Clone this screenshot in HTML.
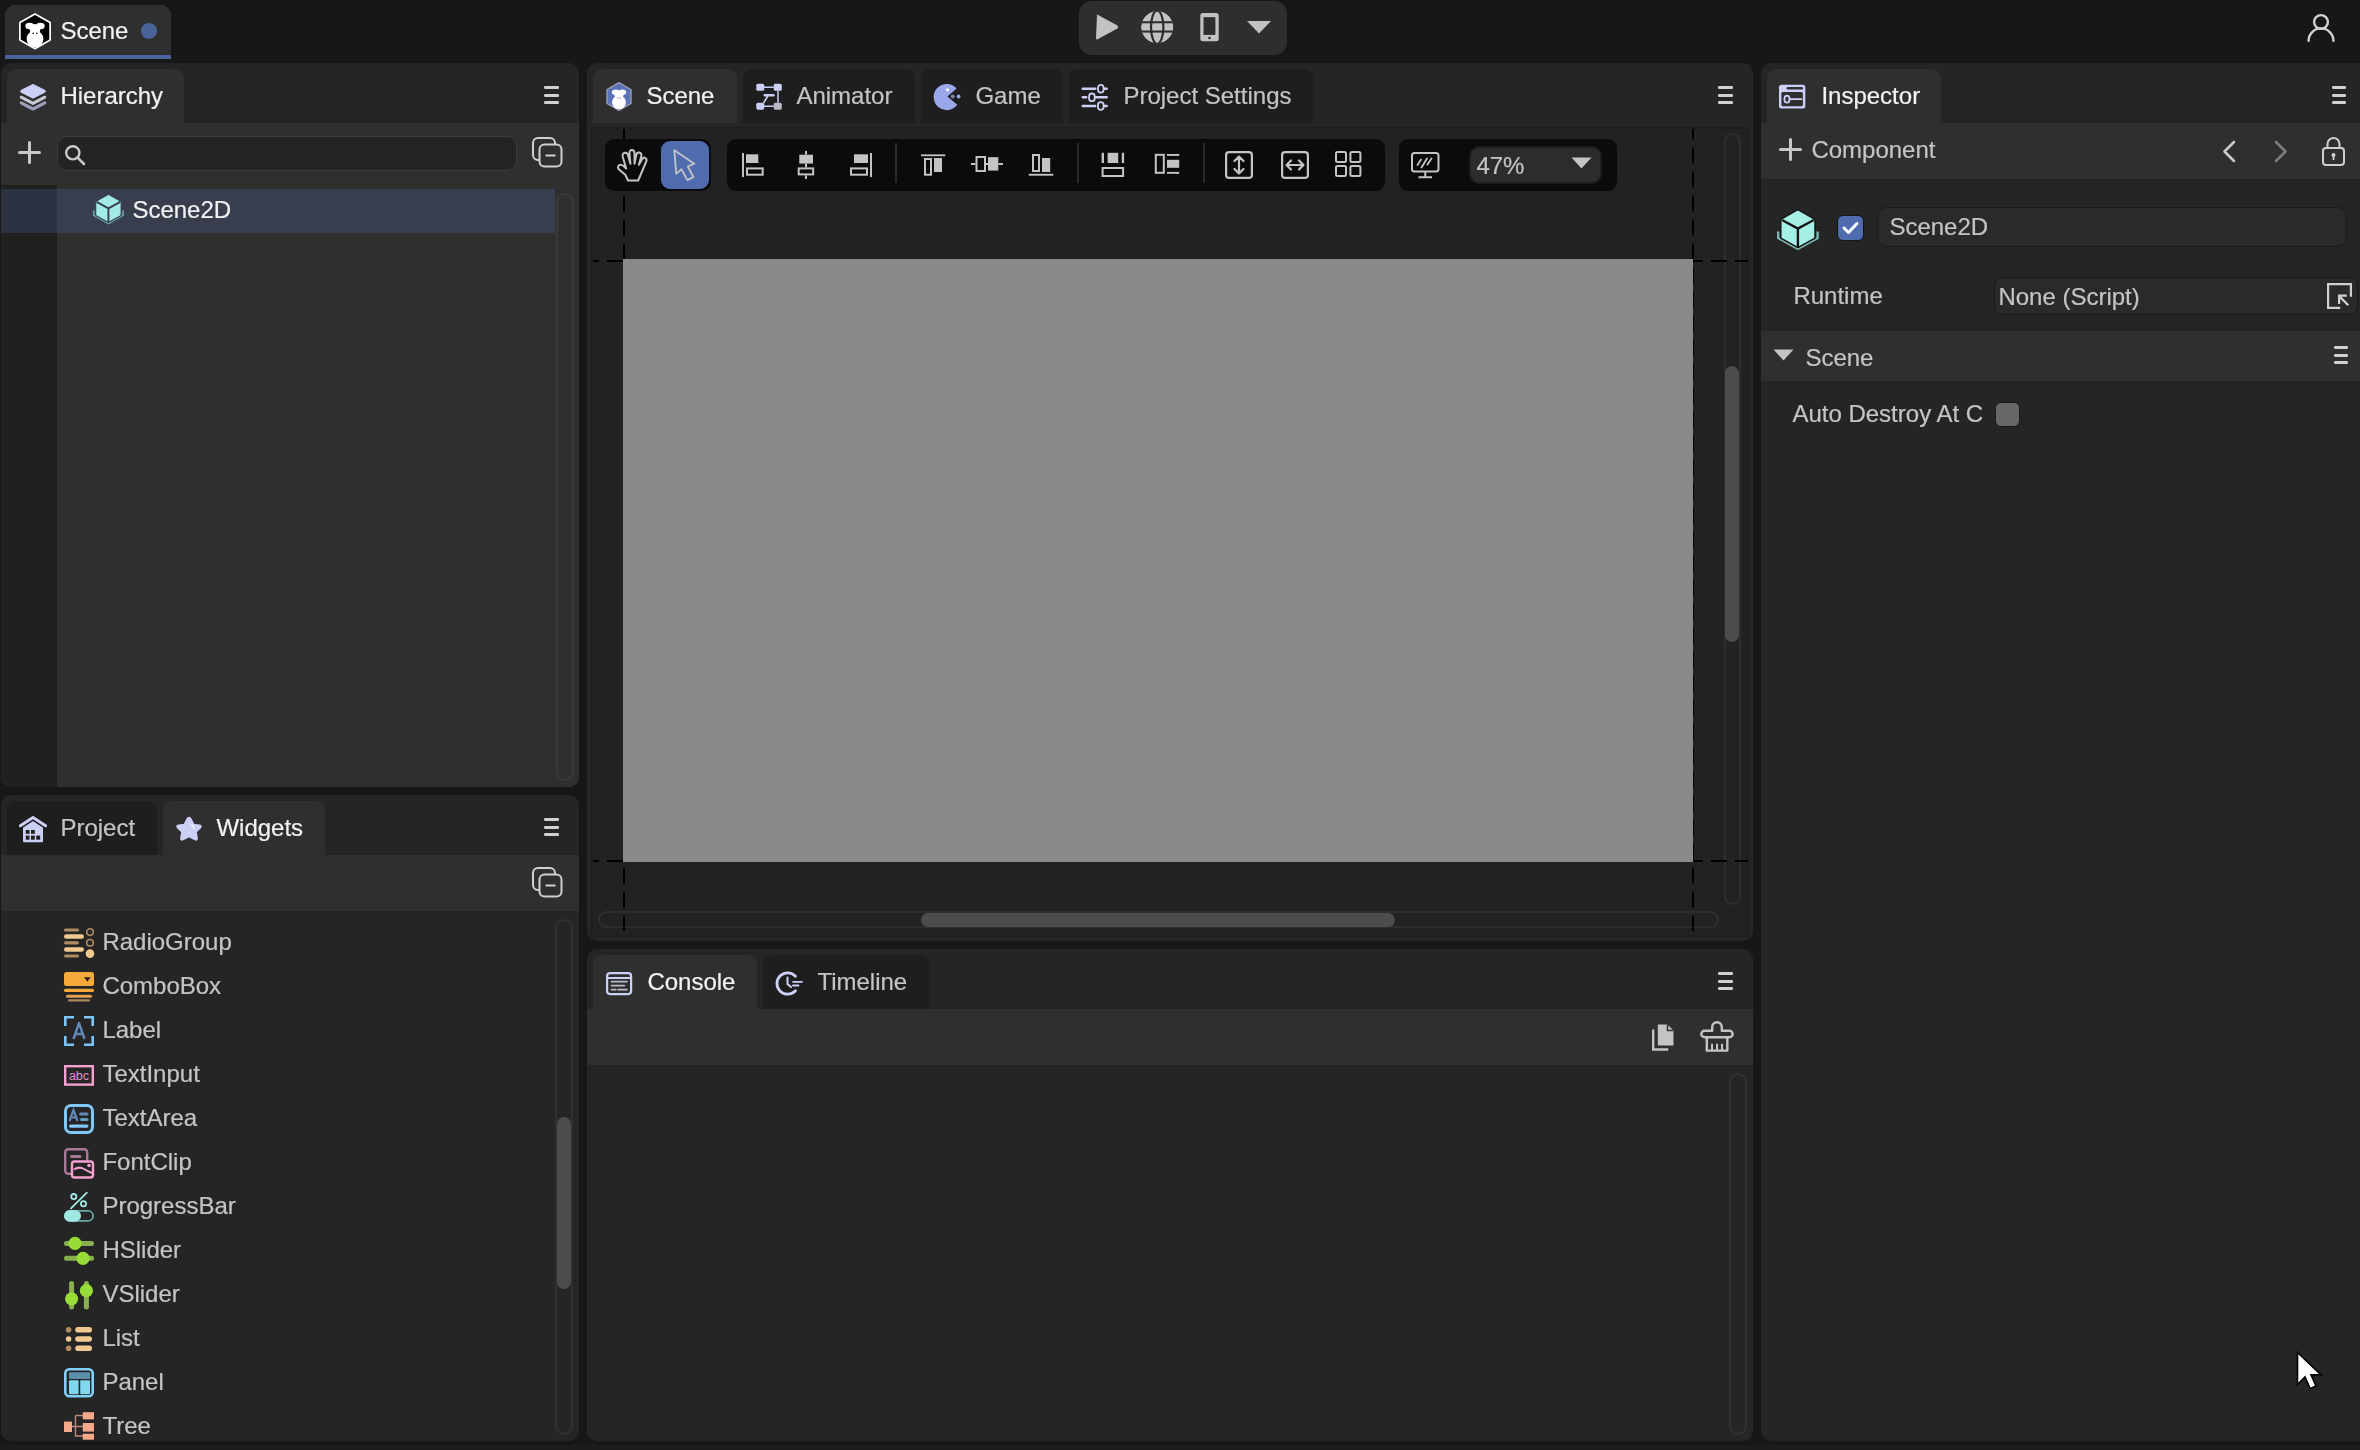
<!DOCTYPE html>
<html><head><meta charset="utf-8">
<style>
*{margin:0;padding:0;box-sizing:border-box}
html,body{width:2360px;height:1450px;overflow:hidden;background:#171717;font-family:"Liberation Sans",sans-serif;font-size:24px;color:#c4c4c4}
.a{position:absolute}
.t{position:absolute;line-height:24px;white-space:nowrap;font-size:24px;transform:translateX(-0.6px);will-change:transform;-webkit-text-stroke:0.2px currentColor}
.w{color:#f2f2f2}
.panel{position:absolute;background:#252525;border-radius:10px;overflow:hidden}
.tab{position:absolute;top:6px;height:54px;border-radius:9px 9px 0 0;background:#2f2f2f}
.itab{background:#1e1e1e}
.ham{position:absolute;width:15px;height:18px}
.ham i{position:absolute;left:0;width:14.5px;height:2.8px;border-radius:1.2px;background:#d0d0d0}
.track{position:absolute;border:2px solid rgba(255,255,255,0.055);border-radius:9px}
.thumb{position:absolute;background:#4c4c4c;border-radius:7px}
svg{position:absolute;overflow:visible}
</style></head>
<body>
<!-- TOP BAR -->
<div class="a" style="left:5px;top:5px;width:166px;height:50px;background:#2f2f2f;border-radius:10px 10px 0 0"></div>
<div class="a" style="left:5px;top:55px;width:166px;height:4px;background:#4a6399"></div>
<svg style="left:19px;top:12.5px" width="32" height="37" viewBox="0 0 32 37">
 <path d="M16 0.9 L31.1 9.6 L31.1 27 L16 35.8 L0.9 27 L0.9 9.6 Z" fill="#000" stroke="#fff" stroke-width="1.7" stroke-linejoin="round"/>
 <ellipse cx="10.6" cy="13" rx="4.3" ry="3.3" fill="#fff"/><ellipse cx="21.4" cy="13" rx="4.3" ry="3.3" fill="#fff"/>
 <ellipse cx="16" cy="16.5" rx="5.3" ry="5.5" fill="#fff"/>
 <circle cx="16" cy="26" r="8.4" fill="#fff"/>
 <circle cx="14.2" cy="20.2" r="0.8" fill="#000"/><circle cx="17.8" cy="20.2" r="0.8" fill="#000"/>
</svg>
<div class="t w" style="left:61px;top:18.8px">Scene</div>
<div class="a" style="left:141px;top:23px;width:16px;height:16px;border-radius:50%;background:#4a6399"></div>

<div class="a" style="left:1079px;top:1px;width:208px;height:54px;background:#2e2e2e;border-radius:13px"></div>
<svg style="left:1095px;top:13px" width="24" height="28" viewBox="0 0 24 28">
 <path d="M2 2.5 Q1 1 2.6 1.8 L22.5 12.6 Q24 14 22.5 15.4 L2.6 26.2 Q1 27 1 25.3 Z" fill="#c2c2c2"/>
</svg>
<svg style="left:1141px;top:10.5px" width="33" height="33" viewBox="0 0 33 33">
 <defs><clipPath id="gc"><circle cx="16.2" cy="16.2" r="16.1"/></clipPath></defs>
 <g clip-path="url(#gc)">
 <circle cx="16.2" cy="16.2" r="16.1" fill="#c2c2c2"/>
 <rect x="0" y="10.2" width="33" height="2.1" fill="#2e2e2e"/>
 <rect x="0" y="19.5" width="33" height="2.1" fill="#2e2e2e"/>
 <ellipse cx="16.2" cy="16.2" rx="6.2" ry="16.6" fill="none" stroke="#2e2e2e" stroke-width="2.2"/>
 </g>
</svg>
<svg style="left:1199.5px;top:12.8px" width="19" height="29" viewBox="0 0 19 29">
 <rect x="0.3" y="0.1" width="18.4" height="28.2" rx="2.5" fill="#c2c2c2"/>
 <rect x="3.5" y="4.2" width="11.9" height="17.7" fill="#2e2e2e"/>
 <circle cx="9.5" cy="25" r="1.3" fill="#2e2e2e"/>
</svg>
<svg style="left:1246px;top:20px" width="26" height="14" viewBox="0 0 26 14">
 <path d="M1 1 L25 1 L13 13.5 Z" fill="#c2c2c2"/>
</svg>
<svg style="left:2307px;top:13px" width="28" height="29" viewBox="0 0 28 29">
 <circle cx="14" cy="9" r="6.9" fill="none" stroke="#d2d2d2" stroke-width="2.4"/>
 <path d="M1.6 27.8 A12.4 12.4 0 0 1 26.4 27.8" fill="none" stroke="#d2d2d2" stroke-width="2.4" stroke-linecap="round"/>
</svg>

<!-- PANELS -->
<div class="panel" style="left:1px;top:63px;width:578px;height:724px">
 <div class="tab" style="left:6px;width:177px"></div>
 <svg style="left:18px;top:21px" width="28" height="27" viewBox="0 0 28 27">
  <path d="M2.2 18.8 L14 25 L25.8 18.8" fill="none" stroke="#9c9eba" stroke-width="3.2" stroke-linecap="round" stroke-linejoin="round"/>
  <path d="M2.2 13.2 L14 19.4 L25.8 13.2" fill="none" stroke="#c9cad8" stroke-width="3" stroke-linecap="round" stroke-linejoin="round"/>
  <path d="M14 0.4 L25.8 6.3 Q27.3 7.25 25.8 8.2 L14 14.2 L2.2 8.2 Q0.7 7.25 2.2 6.3 Z" fill="#cdd0f6" stroke="#cdd0f6" stroke-width="1" stroke-linejoin="round"/>
 </svg>
 <div class="t w" style="left:60.4px;top:20.9px">Hierarchy</div>
 <div class="ham" style="left:543px;top:23px"><i style="top:0.2px"></i><i style="top:7.8px"></i><i style="top:15.4px"></i></div>
 <div class="a" style="left:0;top:60px;width:578px;height:664px;background:#2f2f2f"></div>
 <svg style="left:16.5px;top:78.4px" width="23" height="23" viewBox="0 0 23 23">
  <path d="M11.5 1.5 V21.5 M1.5 11.5 H21.5" stroke="#c8c8c8" stroke-width="3" stroke-linecap="round"/>
 </svg>
 <div class="a" style="left:56px;top:73px;width:460px;height:35px;background:#242424;border:1.5px solid #3c3c3c;border-radius:10px"></div>
 <svg style="left:63.3px;top:81px" width="22" height="22" viewBox="0 0 22 22">
  <circle cx="8.8" cy="8.8" r="6.6" fill="none" stroke="#c8c8c8" stroke-width="2.4"/>
  <path d="M13.6 13.6 L20 20" stroke="#c8c8c8" stroke-width="2.6" stroke-linecap="round"/>
 </svg>
 <svg style="left:531px;top:74px" width="31" height="31" viewBox="0 0 31 31">
  <rect x="1" y="1" width="22" height="22" rx="5" fill="none" stroke="#d0d0d0" stroke-width="2"/>
  <rect x="7.5" y="7.5" width="22" height="22" rx="5" fill="#2f2f2f" stroke="#d0d0d0" stroke-width="2"/>
  <path d="M13.5 18.5 H23.5" stroke="#d0d0d0" stroke-width="2.2"/>
 </svg>
 <div class="a" style="left:0;top:122px;width:56px;height:602px;background:#202020"></div>
 <div class="a" style="left:0;top:126px;width:56px;height:44px;background:#2d3242"></div>
 <div class="a" style="left:56px;top:126px;width:498px;height:44px;background:#383e4e"></div>
 <svg style="left:91px;top:129.5px" width="33" height="32" viewBox="0 0 44 43"><path d="M2.2 23.5 V30 L21.9 41 L41.6 30 V23.5" fill="none" stroke="#6aa6a2" stroke-width="2.2"/>
  <path d="M21.9 1.6 L39 11.3 L39 30.2 L21.9 39.6 L4.8 30.2 L4.8 11.3 Z" fill="#a2ebe4" stroke="#383e4e" stroke-width="1.5" stroke-linejoin="round"/>
  <path d="M6 12 L21.9 20.6 L37.8 12 M21.9 20.6 V39" fill="none" stroke="#383e4e" stroke-width="2.6"/></svg>
 <div class="t w" style="left:131.5px;top:134.6px">Scene2D</div>
 <div class="track" style="left:555px;top:130px;width:18px;height:588px"></div>
</div>
<div class="panel" style="left:1px;top:795px;width:578px;height:646px">
 <div class="tab itab" style="left:6px;width:150px;height:53.5px"></div>
 <div class="tab" style="left:162px;width:162px;height:53.5px"></div>
 <svg style="left:18px;top:21px" width="29" height="28" viewBox="0 0 29 28">
  <path d="M4 10.5 L14 4.2 L24 10.5 V25 Q24 26.2 22.8 26.2 H5.2 Q4 26.2 4 25 Z" fill="#cdd0f6"/>
  <path d="M1.4 9.8 L14 1.6 L26.6 9.8" fill="none" stroke="#1e1e1e" stroke-width="6" stroke-linecap="round" stroke-linejoin="round"/>
  <path d="M1.4 9.8 L14 1.6 L26.6 9.8" fill="none" stroke="#cdd0f6" stroke-width="3" stroke-linecap="round" stroke-linejoin="round"/>
  <rect x="6.8" y="14" width="3.7" height="3.8" fill="#1e1e1e"/><rect x="12" y="14" width="3.8" height="3.8" fill="#1e1e1e"/>
  <rect x="6.8" y="19.6" width="3.7" height="4.1" fill="#1e1e1e"/><rect x="12" y="19.6" width="3.8" height="4.1" fill="#1e1e1e"/><rect x="17.2" y="19.6" width="4" height="4.1" fill="#1e1e1e"/>
 </svg>
 <div class="t" style="left:60px;top:20.8px">Project</div>
 <svg style="left:174.4px;top:21px" width="28" height="27" viewBox="0 0 28 27">
  <path d="M14 1.5 Q15.2 1.5 16 3 L18.6 8.4 L24.6 9.3 Q27 9.8 25.4 11.6 L21 16 L22.1 22 Q22.4 24.6 20 23.6 L14 20.6 L8 23.6 Q5.6 24.6 5.9 22 L7 16 L2.6 11.6 Q1 9.8 3.4 9.3 L9.4 8.4 L12 3 Q12.8 1.5 14 1.5 Z" fill="#cdd0f6" stroke="#cdd0f6" stroke-width="1.5" stroke-linejoin="round"/>
  <path d="M16.8 8.8 Q18.6 10.4 19.2 12.4" fill="none" stroke="#f6f6ff" stroke-width="1.3" stroke-linecap="round"/>
 </svg>
 <div class="t w" style="left:215.9px;top:20.8px">Widgets</div>
 <div class="ham" style="left:543px;top:23px"><i style="top:0.2px"></i><i style="top:7.8px"></i><i style="top:15.4px"></i></div>
 <div class="a" style="left:0;top:59.5px;width:578px;height:56px;background:#2f2f2f"></div>
 <svg style="left:530.5px;top:72px" width="31" height="31" viewBox="0 0 31 31">
  <rect x="1" y="1" width="22" height="22" rx="5" fill="none" stroke="#d0d0d0" stroke-width="2"/>
  <rect x="7.5" y="7.5" width="22" height="22" rx="5" fill="#2f2f2f" stroke="#d0d0d0" stroke-width="2"/>
  <path d="M13.5 18.5 H23.5" stroke="#d0d0d0" stroke-width="2.2"/>
 </svg>
 <div class="a" style="left:0;top:115.5px;width:578px;height:530px;background:#252525"></div>
<svg style="left:63px;top:133px" width="30" height="30" viewBox="0 0 30 30"><rect x="0" y="0.5" width="15" height="3" rx="1.5" fill="#b08a60"/><rect x="0" y="6.3" width="20" height="4.5" rx="2.25" fill="#f0c890"/><rect x="0" y="13.2" width="15" height="3.2" rx="1.6" fill="#b08a60"/><rect x="0" y="19.3" width="20" height="4.5" rx="2.25" fill="#f0c890"/><rect x="0" y="26.5" width="15" height="3.1" rx="1.55" fill="#b08a60"/><circle cx="26" cy="4.1" r="3.3" fill="none" stroke="#b08a60" stroke-width="1.6"/><circle cx="26" cy="14.8" r="3.3" fill="none" stroke="#b08a60" stroke-width="1.6"/><circle cx="26" cy="25.6" r="4.3" fill="#f0c890"/></svg>
<div class="t" style="left:102.4px;top:135.4px">RadioGroup</div>
<svg style="left:63px;top:177px" width="30" height="30" viewBox="0 0 30 30"><rect x="0" y="0" width="30" height="14" rx="2.5" fill="#f5a93a"/><path d="M20 5.3 H26.7 L23.35 9.8 Z" fill="#222"/><rect x="0" y="16.8" width="30" height="3.3" rx="1.65" fill="#f5a93a"/><rect x="2" y="22.8" width="26" height="3" rx="1.5" fill="#e0a050"/><rect x="4" y="27.3" width="22" height="2.2" rx="1.1" fill="#b08a60"/></svg>
<div class="t" style="left:102.4px;top:179.4px">ComboBox</div>
<svg style="left:63px;top:221px" width="30" height="30" viewBox="0 0 30 30"><path d="M1.3 10 V1.3 H10 M20 1.3 H28.7 V10 M28.7 20 V28.7 H20 M10 28.7 H1.3 V20" fill="none" stroke="#7cc4f8" stroke-width="2.6"/><path d="M9.5 23 L15 7 L20.5 23 M11.3 18 H18.7" fill="none" stroke="#6088b8" stroke-width="2.4" stroke-linejoin="round"/></svg>
<div class="t" style="left:102.4px;top:223.4px">Label</div>
<svg style="left:63px;top:270px" width="30" height="30" viewBox="0 0 30 30"><rect x="1.2" y="1.2" width="27.6" height="18.4" fill="none" stroke="#f4a0d0" stroke-width="2.4"/><text x="15" y="15.2" font-family="Liberation Sans" font-size="12.5" fill="#e890c0" text-anchor="middle">abc</text></svg>
<div class="t" style="left:102.4px;top:267.4px">TextInput</div>
<svg style="left:63px;top:309px" width="30" height="30" viewBox="0 0 30 30"><rect x="1.5" y="1.5" width="27" height="27" rx="5.5" fill="none" stroke="#80c8f8" stroke-width="3"/><path d="M5.5 17 L9.5 6 L13.5 17 M7 13.5 H12" fill="none" stroke="#6088b8" stroke-width="2.2"/><rect x="15" y="8.5" width="9.5" height="3" rx="1.5" fill="#6088b8"/><rect x="16" y="14" width="8.5" height="3" rx="1.5" fill="#5fa0c0"/><rect x="5" y="20.5" width="19.5" height="3.2" rx="1.6" fill="#80c8f8"/></svg>
<div class="t" style="left:102.4px;top:311.4px">TextArea</div>
<svg style="left:63px;top:353px" width="30" height="30" viewBox="0 0 30 30"><rect x="1.2" y="1.2" width="22" height="24.5" rx="3" fill="none" stroke="#a87898" stroke-width="2.4"/><rect x="6" y="7" width="11.5" height="3" rx="1.5" fill="#a87898"/><rect x="8" y="13.5" width="21" height="16" rx="2.5" fill="#242424" stroke="#f4a0d0" stroke-width="2.4"/><path d="M10 21.5 Q15 18 20 21 Q24 23.5 28 25" fill="none" stroke="#f4a0d0" stroke-width="2"/><circle cx="25" cy="17.5" r="1.8" fill="#f4a0d0"/></svg>
<div class="t" style="left:102.4px;top:355.4px">FontClip</div>
<svg style="left:63px;top:397px" width="30" height="30" viewBox="0 0 30 30"><path d="M7 16.3 L22.8 0.6" stroke="#a0e8e4" stroke-width="1.8" stroke-linecap="round"/><circle cx="9.8" cy="4.6" r="2.6" fill="none" stroke="#a0e8e4" stroke-width="1.8"/><circle cx="19.5" cy="11.8" r="2.6" fill="none" stroke="#a0e8e4" stroke-width="1.8"/><rect x="0.9" y="18.9" width="28.2" height="10" rx="5" fill="none" stroke="#6aa8a8" stroke-width="1.8"/><rect x="0" y="18" width="17" height="11.8" rx="5.9" fill="#a0e8e4"/></svg>
<div class="t" style="left:102.4px;top:399.4px">ProgressBar</div>
<svg style="left:63px;top:441px" width="30" height="30" viewBox="0 0 30 30"><rect x="0" y="5" width="30" height="5" rx="2.5" fill="#88b050"/><circle cx="11" cy="7.4" r="6.6" fill="#98dc38"/><rect x="0" y="19.8" width="30" height="5" rx="2.5" fill="#88b050"/><circle cx="19" cy="22.3" r="6.6" fill="#98dc38"/></svg>
<div class="t" style="left:102.4px;top:443.4px">HSlider</div>
<svg style="left:63px;top:485px" width="30" height="30" viewBox="0 0 30 30"><rect x="5.1" y="1" width="5" height="28.5" rx="2.5" fill="#88b050"/><circle cx="7.6" cy="18.8" r="6.6" fill="#98dc38"/><rect x="19.9" y="1" width="5" height="28.5" rx="2.5" fill="#88b050"/><circle cx="22.4" cy="10.7" r="6.6" fill="#98dc38"/></svg>
<div class="t" style="left:102.4px;top:487.4px">VSlider</div>
<svg style="left:63px;top:529px" width="30" height="30" viewBox="0 0 30 30"><circle cx="4.6" cy="5.8" r="2.8" fill="#b08a60"/><circle cx="4.6" cy="15" r="2.8" fill="#f0c890"/><circle cx="4.6" cy="24.3" r="2.8" fill="#b08a60"/><rect x="11.2" y="3" width="16.8" height="5.6" rx="2.8" fill="#f0c890"/><rect x="11.2" y="12.2" width="16.8" height="5.6" rx="2.8" fill="#f0c890"/><rect x="11.2" y="21.5" width="16.8" height="5.6" rx="2.8" fill="#f0c890"/></svg>
<div class="t" style="left:102.4px;top:531.4px">List</div>
<svg style="left:63px;top:573px" width="30" height="30" viewBox="0 0 30 30"><rect x="1.3" y="1.3" width="27.4" height="27" rx="4" fill="none" stroke="#80d0f8" stroke-width="2.6"/><rect x="5" y="4.2" width="21" height="6.8" rx="1" fill="#5a90a8"/><rect x="5" y="12.2" width="9.6" height="14" rx="1" fill="#80d8f0"/><rect x="16.2" y="12.2" width="9.8" height="14" rx="1" fill="#80d8f0"/></svg>
<div class="t" style="left:102.4px;top:575.4px">Panel</div>
<svg style="left:63px;top:617px" width="30" height="30" viewBox="0 0 30 30"><path d="M11.5 3.5 H19 M11.5 3.5 V24 H19 M8 14.5 H19" fill="none" stroke="#c08878" stroke-width="1.4"/><rect x="0" y="9.6" width="8" height="10.4" fill="#f5a88a"/><rect x="18.8" y="0.2" width="11.2" height="7.2" fill="#f5a88a"/><rect x="18.8" y="11" width="11.2" height="8.6" fill="#f5a88a"/><rect x="18.8" y="21.7" width="11.2" height="6" fill="#f5a88a"/></svg>
<div class="t" style="left:102.4px;top:619.4px">Tree</div>
 <div class="track" style="left:554px;top:124px;width:18px;height:516px"></div>
 <div class="thumb" style="left:556px;top:322px;width:14px;height:172px"></div>
</div>
<div class="panel" style="left:587px;top:63px;width:1166px;height:878px">
 <div class="tab" style="left:6px;width:144px"></div>
 <div class="tab itab" style="left:156px;width:172px"></div>
 <div class="tab itab" style="left:334px;width:141.5px"></div>
 <div class="tab itab" style="left:482px;width:244px"></div>
 <svg style="left:19px;top:19.2px" width="26" height="29" viewBox="0 0 26 29">
  <path d="M13 0.7 L25 7.5 L25 21.5 L13 28.3 L1 21.5 L1 7.5 Z" fill="#5c72b6" stroke="#9a9cb0" stroke-width="1.4" stroke-linejoin="round"/>
  <ellipse cx="9.6" cy="10.2" rx="3.7" ry="2.7" fill="#fff"/><ellipse cx="16.4" cy="10.2" rx="3.7" ry="2.7" fill="#fff"/>
  <ellipse cx="13" cy="13.2" rx="4.4" ry="4.6" fill="#fff"/>
  <circle cx="13" cy="20.4" r="6.9" fill="#fff"/>
  <circle cx="11.8" cy="15.9" r="0.6" fill="#5c72b6"/><circle cx="14.2" cy="15.9" r="0.6" fill="#5c72b6"/>
 </svg>
 <div class="t w" style="left:60.3px;top:20.5px">Scene</div>
 <svg style="left:169px;top:20.2px" width="27" height="28" viewBox="0 0 27 28">
  <path d="M8 4.3 H17.7 M8 23.2 H17.7 M22 7.8 V19.7" stroke="#cdd0f6" stroke-width="1.5"/>
  <path d="M8.8 12.2 H17.5" stroke="#cdd0f6" stroke-width="2.4" stroke-linecap="round"/>
  <path d="M11.8 13 L7.6 20" stroke="#cdd0f6" stroke-width="1.6"/>
  <rect x="0.3" y="0.7" width="7.9" height="7.1" rx="1.6" fill="#cdd0f6"/><rect x="17.7" y="0.7" width="8.1" height="7.1" rx="1.6" fill="#cdd0f6"/>
  <rect x="0.3" y="19.7" width="7.9" height="7" rx="1.6" fill="#cdd0f6"/><rect x="17.7" y="19.7" width="8.1" height="7" rx="1.6" fill="#b9bac6"/>
 </svg>
 <div class="t" style="left:210.1px;top:20.5px">Animator</div>
 <svg style="left:347px;top:21px" width="28" height="27" viewBox="0 0 28 27">
  <path d="M22.6 4.4 A13.1 13.1 0 1 0 23.3 20.8 L13.4 12.6 Z" fill="#9aa8ea"/>
  <circle cx="13.5" cy="5.8" r="1.6" fill="#fff"/>
  <circle cx="18.7" cy="12.5" r="1.9" fill="#7d88b0"/><circle cx="24.6" cy="12.5" r="1.9" fill="#9aa8ea"/>
 </svg>
 <div class="t" style="left:388.9px;top:20.5px">Game</div>
 <svg style="left:494px;top:20.5px" width="28" height="28" viewBox="0 0 28 28">
  <path d="M1.8 4.7 H14.2 M23.6 4.7 H25.6 M1.8 13.3 H5.2 M14.8 13.3 H25.6 M1.8 22 H14.2 M23.6 22 H25.6" stroke="#cdd0f6" stroke-width="2.6" stroke-linecap="round"/>
  <rect x="17" y="0.9" width="5.6" height="7.7" rx="2.8" fill="none" stroke="#cdd0f6" stroke-width="1.8"/>
  <rect x="8.1" y="9.5" width="5.6" height="7.7" rx="2.8" fill="none" stroke="#cdd0f6" stroke-width="1.8"/>
  <rect x="17" y="18.1" width="5.6" height="7.7" rx="2.8" fill="none" stroke="#cdd0f6" stroke-width="1.8"/>
 </svg>
 <div class="t" style="left:536.5px;top:20.5px">Project Settings</div>
 <div class="ham" style="left:1131px;top:23px"><i style="top:0.2px"></i><i style="top:7.8px"></i><i style="top:15.4px"></i></div>
 <div class="a" style="left:4px;top:64px;width:1158px;height:809.6px;background:#222222;border:2px solid #1e1e1e"></div>
 <!-- scrollbars -->
 <div class="track" style="left:1136.5px;top:70px;width:17.5px;height:772px"></div>
 <div class="thumb" style="left:1138.4px;top:303px;width:13.6px;height:276px"></div>
 <div class="track" style="left:11px;top:848.3px;width:1121px;height:17.2px"></div>
 <div class="thumb" style="left:333.6px;top:850.4px;width:474.4px;height:13.2px"></div>
 <div class="a" style="left:36px;top:66px;width:2px;height:802.4px;background:repeating-linear-gradient(to bottom,#000 0 16px,transparent 16px 24px);background-position:0 -5.6px"></div>
 <div class="a" style="left:1104.6px;top:66px;width:2px;height:802.4px;background:repeating-linear-gradient(to bottom,#000 0 16px,transparent 16px 24px);background-position:0 -5.6px"></div>
 <div class="a" style="left:6px;top:196.5px;width:1155px;height:2px;background:repeating-linear-gradient(to right,#000 0 16px,transparent 16px 24px);background-position:-10px 0"></div>
 <div class="a" style="left:6px;top:797.3px;width:1155px;height:2px;background:repeating-linear-gradient(to right,#000 0 16px,transparent 16px 24px);background-position:-10px 0"></div>
 <!-- canvas -->
 <div class="a" style="left:36px;top:196.2px;width:1070.3px;height:603.3px;background:#8a8a8a"></div>
 
 <!-- toolbar groups -->
 <div class="a" style="left:18px;top:75.7px;width:106px;height:52px;background:#0b0b0b;border-radius:9px"></div>
 <div class="a" style="left:74px;top:77.7px;width:48px;height:48px;background:#4f6caf;border-radius:9px"></div>
 <div class="a" style="left:140px;top:75.7px;width:657.7px;height:52px;background:#0b0b0b;border-radius:9px"></div>
 <div class="a" style="left:812px;top:75.7px;width:217.7px;height:52px;background:#0b0b0b;border-radius:9px"></div>
 <div class="a" style="left:882.4px;top:83.2px;width:132.6px;height:37.6px;background:#2c2c2c;border:2px solid #1d1d1d;border-radius:10px"></div>
 <div class="t" style="left:889.6px;top:90.9px">47%</div>
 <svg style="left:983.8px;top:94.3px" width="21" height="12" viewBox="0 0 21 12"><path d="M0.5 0.5 H20.5 L10.5 11.5 Z" fill="#c4c4c4"/></svg>
 <svg style="left:-587px;top:-63px" width="1500" height="260" viewBox="0 0 1500 260">
 <g fill="none" stroke="#c4c4c4" stroke-width="2" stroke-linejoin="round" stroke-linecap="round">
  <path transform="translate(0,1)" d="M628 179.5 L625.3 173.8 L619.3 168.8 Q616.8 166.2 619 164.3 Q621 162.8 623.6 165 L626.2 167.5 L622.8 156 Q621.9 152.3 624.8 151.8 Q627.5 151.4 628.2 154.5 L630.4 162.8 L629.5 152.6 Q629.3 149.1 631.8 149.1 Q634.4 149.1 634.5 152.3 L634.5 162.8 L636.3 154 Q636.9 151 639.4 151.5 Q641.9 152.2 641.3 155 L638.9 163.8 L642 158.3 Q643.4 155.8 645.4 157 Q647.4 158.3 646.1 160.8 L638.2 179.5 Z"/>
  <path transform="translate(673.5,149.5)" d="M0.8 0.8 L2.8 24.3 L8 19.6 L13.8 30.6 L20 27.6 L14.3 17 L20.8 14.2 Z" stroke-width="1.8"/>
 </g>
 <g fill="#c4c4c4">
  <rect x="742" y="153" width="2" height="24"/><rect x="746" y="154.3" width="12.3" height="8.7"/>
  <rect x="805" y="151" width="2" height="3.7"/><rect x="799.3" y="154.7" width="13.7" height="8.9"/><rect x="805" y="163.6" width="2" height="3.8"/><rect x="805" y="175.4" width="2" height="3.6"/>
  <rect x="870" y="153" width="2" height="24"/><rect x="854" y="154.3" width="14" height="8.7"/>
  <rect x="921" y="154.4" width="24.3" height="1.8"/><rect x="934" y="158" width="8" height="14"/>
  <rect x="971" y="163" width="4.5" height="2"/><rect x="986" y="163" width="2" height="2"/><rect x="998.3" y="163" width="4.7" height="2"/><rect x="988" y="157.2" width="10.3" height="13.4"/>
  <rect x="1042" y="158" width="8.2" height="14"/><rect x="1028.8" y="173.8" width="24.5" height="1.9"/>
  <rect x="1101.6" y="152.8" width="2.4" height="10.2"/><rect x="1121.8" y="152.8" width="2.3" height="10.2"/><rect x="1107.6" y="152.8" width="10.6" height="10.2"/>
  <rect x="1167" y="154" width="12.2" height="1.9"/><rect x="1167" y="159.8" width="12.2" height="8"/><rect x="1167" y="171.9" width="12.2" height="1.9"/>
 </g>
 <g fill="#2a2a2a"><rect x="895" y="143" width="2" height="40"/><rect x="1077" y="143" width="2" height="40"/><rect x="1203" y="143" width="2" height="40"/></g>
 <g fill="none" stroke="#c4c4c4" stroke-width="2">
  <rect x="747" y="168.4" width="15.7" height="6.3"/>
  <rect x="798.7" y="168.4" width="14.5" height="6"/>
  <rect x="851" y="168.4" width="16" height="6.3"/>
  <rect x="925" y="159" width="6" height="15.7"/>
  <rect x="976.5" y="157" width="8.5" height="14"/>
  <rect x="1033" y="155" width="6" height="16"/>
  <rect x="1102.6" y="168" width="20.5" height="8"/>
  <rect x="1155.8" y="154.8" width="8" height="18"/>
 </g>
 <g fill="none" stroke="#c4c4c4" stroke-width="2.2" stroke-linecap="round" stroke-linejoin="round">
  <rect x="1226.1" y="152.1" width="25.8" height="25.8" rx="3"/>
  <path d="M1239 156.5 V173.5 M1234.5 161 L1239 156.5 L1243.5 161 M1234.5 169 L1239 173.5 L1243.5 169"/>
  <rect x="1282.1" y="152.1" width="25.8" height="25.8" rx="3"/>
  <path d="M1286.5 165 H1303.5 M1291 160.5 L1286.5 165 L1291 169.5 M1299 160.5 L1303.5 165 L1299 169.5"/>
  <rect x="1336" y="152" width="10" height="10" rx="1.5" stroke-width="2"/><rect x="1350.4" y="152" width="10" height="10" rx="1.5" stroke-width="2"/>
  <rect x="1336" y="166" width="10" height="10" rx="1.5" stroke-width="2"/><rect x="1350.4" y="166" width="10" height="10" rx="1.5" stroke-width="2"/>
  <rect x="1412" y="153" width="26.5" height="18.5" rx="2.5" stroke-width="2"/>
  <path d="M1425.3 171.5 V177 M1418.5 177.3 H1432" stroke-width="2" stroke-linecap="butt"/>
  <path d="M1417.5 165 L1421 159.5 M1421.5 167.5 L1427 158.5 M1427.5 164.5 L1431.5 158.5" stroke-width="1.8"/>
 </g>
</svg>

</div>
<div class="panel" style="left:587px;top:949px;width:1166px;height:492px">
 <div class="tab" style="left:6px;width:164px"></div>
 <div class="tab itab" style="left:176px;width:166px"></div>
 <svg style="left:18.8px;top:23px" width="27" height="24" viewBox="0 0 27 24">
  <rect x="1.1" y="1.1" width="24" height="21" rx="3" fill="none" stroke="#cdd0f6" stroke-width="2.2"/>
  <path d="M1 6 H25.2" stroke="#cdd0f6" stroke-width="2"/>
  <path d="M5.6 9.7 H20.8 M5.6 13.7 H18.3 M5.6 17.6 H9.8 M12.1 17.6 H20.8" stroke="#b9bacb" stroke-width="1.8" stroke-linecap="round"/>
 </svg>
 <div class="t w" style="left:60.6px;top:20.9px">Console</div>
 <svg style="left:188.7px;top:22px" width="27" height="25" viewBox="0 0 27 25">
  <path d="M19.5 5.2 A10.7 10.7 0 1 0 19.5 19.8" fill="none" stroke="#cdd0f6" stroke-width="2.8" stroke-linecap="round"/>
  <path d="M11.5 6.5 V13 L15 16" fill="none" stroke="#cdd0f6" stroke-width="2" stroke-linecap="round"/>
  <path d="M17 10.8 H26 M17 14.5 H22.5" stroke="#cdd0f6" stroke-width="1.8" stroke-linecap="round"/>
 </svg>
 <div class="t" style="left:230.5px;top:20.9px">Timeline</div>
 <div class="ham" style="left:1131px;top:23px"><i style="top:0.2px"></i><i style="top:7.8px"></i><i style="top:15.4px"></i></div>
 <div class="a" style="left:0;top:60px;width:1166px;height:56px;background:#2f2f2f"></div>
 <svg style="left:1065px;top:74px" width="23" height="28" viewBox="0 0 23 28">
  <path d="M1.2 6.5 V26.5 H16.3" fill="none" stroke="#c4c4c4" stroke-width="2.4"/>
  <path d="M5.8 1.5 H15.5 L21.5 7.5 V22.5 H5.8 Z" fill="#c4c4c4"/>
  <path d="M15.5 1.5 V7.5 H21.5" fill="none" stroke="#2f2f2f" stroke-width="1.5"/>
 </svg>
 <svg style="left:1113px;top:72px" width="34" height="32" viewBox="0 0 34 32">
  <path d="M12.2 9.8 H4.5 A3.2 3.2 0 0 0 4.5 16.2 H29.5 A3.2 3.2 0 0 0 29.5 9.8 H21.8 V6 A4.8 4.8 0 0 0 12.2 6 Z" fill="none" stroke="#c4c4c4" stroke-width="2.4" stroke-linejoin="round"/>
  <path d="M6.8 16.2 V29.6 H27.3 V16.2" fill="none" stroke="#c4c4c4" stroke-width="2.4" stroke-linejoin="round"/>
  <path d="M12 22.8 V29 M17 22.8 V29 M22 22.8 V29" stroke="#c4c4c4" stroke-width="2"/>
 </svg>
 <div class="track" style="left:1142px;top:124px;width:18px;height:361.5px"></div>
</div>
<div class="panel" style="left:1761px;top:63px;width:612px;height:1378px">
 <div class="tab" style="left:6px;width:174px"></div>
 <svg style="left:17.3px;top:21px" width="28" height="26" viewBox="0 0 28 26">
  <rect x="1" y="0.8" width="26.3" height="23.8" rx="2.5" fill="#cdd0f6"/>
  <rect x="3.4" y="8" width="21.5" height="14.2" rx="1.5" fill="#2f2f2f"/>
  <rect x="8.6" y="2.9" width="16.4" height="2.6" rx="1.3" fill="#2f2f2f"/>
  <ellipse cx="9" cy="15.2" rx="2.6" ry="3.5" fill="none" stroke="#cdd0f6" stroke-width="1.8"/>
  <path d="M11.6 15.2 H23.6" stroke="#cdd0f6" stroke-width="1.8" stroke-linecap="round"/>
 </svg>
 <div class="t w" style="left:61.1px;top:20.9px">Inspector</div>
 <div class="ham" style="left:570.7px;top:23px"><i style="top:0.2px"></i><i style="top:7.8px"></i><i style="top:15.4px"></i></div>
 <div class="a" style="left:0;top:60px;width:612px;height:56px;background:#2f2f2f"></div>
 <svg style="left:18.4px;top:74.7px" width="23" height="23" viewBox="0 0 23 23">
  <path d="M11.5 1.5 V21.5 M1.5 11.5 H21.5" stroke="#c8c8c8" stroke-width="3" stroke-linecap="round"/>
 </svg>
 <div class="t" style="left:50.5px;top:74.6px">Component</div>
 <svg style="left:461px;top:76.5px" width="14" height="23" viewBox="0 0 14 23"><path d="M12 2 L2.5 11.5 L12 21" fill="none" stroke="#cacaca" stroke-width="2.6" stroke-linecap="round" stroke-linejoin="round"/></svg>
 <svg style="left:513px;top:76.5px" width="14" height="23" viewBox="0 0 14 23"><path d="M2 2 L11.5 11.5 L2 21" fill="none" stroke="#7c7c7c" stroke-width="2.6" stroke-linecap="round" stroke-linejoin="round"/></svg>
 <svg style="left:560.8px;top:73.7px" width="23" height="29" viewBox="0 0 23 29">
  <path d="M5.5 11 V7 A6 6 0 0 1 17.5 7 V11" fill="none" stroke="#cfcfcf" stroke-width="2"/>
  <rect x="1" y="11" width="21" height="17" rx="3" fill="none" stroke="#cfcfcf" stroke-width="2"/>
  <circle cx="11.5" cy="18" r="2" fill="#cfcfcf"/><rect x="10.6" y="18" width="1.8" height="5" fill="#cfcfcf"/>
 </svg>
 <svg style="left:14.5px;top:144.5px" width="44" height="43" viewBox="0 0 44 43"><path d="M2.2 23.5 V30 L21.9 41 L41.6 30 V23.5" fill="none" stroke="#78b4ac" stroke-width="2.4"/>
  <path d="M21.9 1.6 L39 11.3 L39 30.2 L21.9 39.6 L4.8 30.2 L4.8 11.3 Z" fill="#a6efe6" stroke="#151515" stroke-width="1.5" stroke-linejoin="round"/>
  <path d="M6 12 L21.9 20.6 L37.8 12 M21.9 20.6 V39" fill="none" stroke="#151515" stroke-width="2.4"/></svg>
 <div class="a" style="left:76px;top:151.7px;width:26.5px;height:26.6px;background:#4f6caf;border:1.5px solid #151515;border-radius:6px"></div>
 <svg style="left:81px;top:158px" width="17" height="14" viewBox="0 0 17 14"><path d="M2 7 L6.5 11.5 L15 2.5" fill="none" stroke="#fff" stroke-width="3" stroke-linecap="round" stroke-linejoin="round"/></svg>
 <div class="a" style="left:115.5px;top:144.4px;width:470px;height:39.2px;background:#2a2a2a;border:1.5px solid #1a1a1a;border-radius:10px"></div>
 <div class="t" style="left:129px;top:151.5px">Scene2D</div>
 <div class="t" style="left:32.5px;top:220.7px">Runtime</div>
 <div class="a" style="left:232.7px;top:213.9px;width:364px;height:38px;background:#2a2a2a;border:1.5px solid #1a1a1a;border-radius:9px"></div>
 <div class="t" style="left:238.3px;top:221.7px">None (Script)</div>
 <svg style="left:566px;top:220px" width="26" height="26" viewBox="0 0 26 26">
  <path d="M13.2 24.9 H1.1 V1.1 H23.9 V13.8" fill="none" stroke="#d0d0d0" stroke-width="2.2"/>
  <path d="M21.3 22.3 L12.4 13.4 M12.1 21 V12.7 H19.8" fill="none" stroke="#d0d0d0" stroke-width="2.2"/>
 </svg>
 <div class="a" style="left:0;top:268px;width:612px;height:49.5px;background:#2f2f2f"></div>
 <svg style="left:12px;top:286px" width="21" height="12" viewBox="0 0 21 12"><path d="M0.5 0.5 H20.5 L10.5 11.5 Z" fill="#c4c4c4"/></svg>
 <div class="t" style="left:44.5px;top:282.6px">Scene</div>
 <div class="ham" style="left:572.5px;top:283px"><i style="top:0.2px"></i><i style="top:7.8px"></i><i style="top:15.4px"></i></div>
 <div class="t" style="left:32px;top:338.7px">Auto Destroy At C</div>
 <div class="a" style="left:233.5px;top:338.9px;width:25.5px;height:25.5px;background:#676767;border:1.5px solid #1b1b1b;border-radius:6px"></div>
</div>

<svg style="left:2296px;top:1351px" width="28" height="40" viewBox="0 0 28 40">
 <path d="M1.5 1.5 V33.5 L9 26 L14.2 37.5 L20 35 L15 23.8 L25 23.8 Z" fill="#fff" stroke="#000" stroke-width="1.6" stroke-linejoin="miter"/>
</svg>
<!-- bottom strip -->
<div class="a" style="left:0;top:1445px;width:2360px;height:5px;background:#1c1c1c"></div>
</body></html>
